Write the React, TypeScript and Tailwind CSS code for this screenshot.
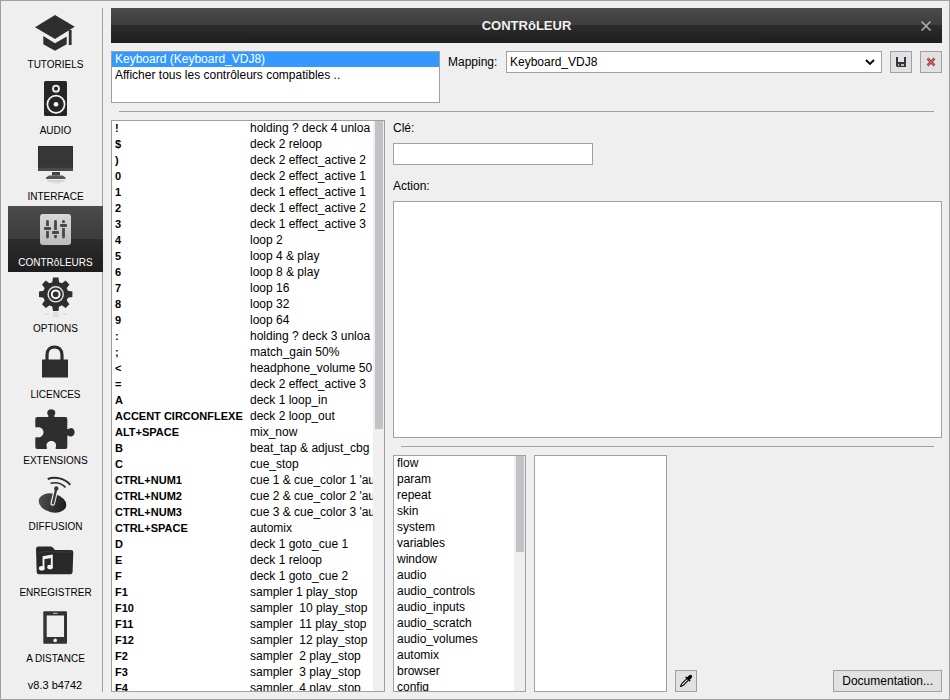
import React from "react";

type Section = { label: string; icon: React.ReactNode };

const DARK = "#2e2e2e";
const LIGHT = "#f4f4f4";

const gearTeeth = [0, 45, 90, 135, 180, 225, 270, 315];

const sections: Section[] = [
  {
    label: "TUTORIELS",
    icon: (
      <g fill={DARK}>
        <path d="M23 7 L42.7 18.8 L23 31 L3 19.2 Z" />
        <path d="M11.3 28 L23 35.3 L34.7 28.5 V36.3 L23 42.7 L11.3 36.3 Z" />
        <path d="M36.8 22 H39.6 V37 H36.8 Z" />
      </g>
    ),
  },
  {
    label: "AUDIO",
    icon: (
      <g>
        <rect x="12" y="7" width="23" height="35" rx="1.5" fill="#262626" />
        <circle cx="24" cy="14.7" r="3" fill="none" stroke={LIGHT} strokeWidth="1.8" />
        <circle cx="24" cy="30.3" r="8.6" fill="none" stroke={LIGHT} strokeWidth="1.7" />
        <circle cx="24" cy="30.3" r="2.4" fill={LIGHT} />
      </g>
    ),
  },
  {
    label: "INTERFACE",
    icon: (
      <g>
        <rect x="6" y="6" width="35" height="25" fill="#2c2c2c" />
        <rect x="7" y="7" width="33" height="20" fill="#363636" />
        <rect x="6" y="27.5" width="35" height="3.5" fill="#4a4a4a" />
        <rect x="20" y="32" width="8" height="3.5" fill="#444" />
        <path d="M14 39 V37.5 L17 35.5 H30.500 L33.500 37.5 V39 Z" fill="#555" />
        <path d="M14 40 H33.5 L31 42 H17 Z" fill="#d2d2d2" />
        <rect x="20" y="42" width="8" height="2" fill="#e2e2e2" />
      </g>
    ),
  },
  {
    label: "CONTRôLEURS",
    icon: (
      <g>
        <rect x="8" y="8" width="31" height="31" rx="3" fill="url(#tile)" />
        <path
          d="M15.500 15.500 V31 M23.500 15.500 V31 M31.500 15.500 V31"
          stroke="#484848"
          strokeWidth="2.800"
          strokeLinecap="round"
        />
        <path d="M13.500 20 h4 v5 h-4 Z M21.500 24 h4 v5 h-4 Z M29.500 17 h4 v5 h-4 Z" fill="#cacaca" />
        <g fill="#484848">
          <rect x="12" y="21" width="7" height="3" rx="1" />
          <rect x="20" y="25" width="7" height="3" rx="1" />
          <rect x="28" y="18" width="7" height="3" rx="1" />
        </g>
      </g>
    ),
  },
  {
    label: "OPTIONS",
    icon: (
      <g>
        <g fill={DARK}>
          <circle cx="23.7" cy="22.3" r="12.6" />
          {gearTeeth.map((a) => (
            <path key={a} d="M20 12 L21 5.6 H26.4 L27.4 12 Z" transform={`rotate(${a} 23.7 22.3)`} />
          ))}
        </g>
        <circle cx="23.7" cy="22.3" r="7.6" fill="none" stroke="#e6e6e6" strokeWidth="1.4" />
        <circle cx="23.7" cy="22.3" r="3.9" fill="none" stroke={LIGHT} strokeWidth="2" />
        <path d="M12.500 41 h4 v2 h-4 Z M21 40 h5.500 v5 h-5.500 Z M31 41 h4 v2 h-4 Z" fill="#dedede" />
      </g>
    ),
  },
  {
    label: "LICENCES",
    icon: (
      <g>
        <rect x="10" y="21.500" width="26" height="18" fill="#2f2c2d" />
        <path d="M15 22 V17 C15 11.500 18.500 9 22.500 9 C26.500 9 30 11.500 30 17 V22" fill="none" stroke="#2f2c2d" strokeWidth="3.200" />
      </g>
    ),
  },
  {
    label: "EXTENSIONS",
    icon: (
      <path
        d="M5.300 13 H15.200 C16.800 13 16.800 12.300 15.900 11 C14.200 8 16 5.200 19.300 5.200 C22.600 5.200 24.400 8 22.700 11 C21.800 12.300 21.800 13 23.400 13 H33.300 Q35.300 13 35.300 15 V24 C35.300 25.500 36 25.300 37 24.700 C40 23 42.600 25.200 42.600 28.300 C42.600 31.400 40 33.600 37 31.900 C36 31.300 35.300 31.100 35.300 32.600 V43 Q35.300 45 33.300 45 H24.500 C23.200 45 23.500 44.300 23.900 43 C24.800 39.500 22.500 37 19.300 37 C16.100 37 13.800 39.500 14.700 43 C15.100 44.300 15.400 45 14.100 45 H5.300 Q3.300 45 3.300 43 V34.500 C3.300 33 4 33 5.300 33.300 C8.800 34 11.500 31.500 11.500 28.300 C11.500 25.100 8.800 22.600 5.300 23.300 C4 23.600 3.300 23.500 3.300 22.100 V15 Q3.300 13 5.300 13 Z"
        fill={DARK}
      />
    ),
  },
  {
    label: "DIFFUSION",
    icon: (
      <g>
        <ellipse cx="20.500" cy="33" rx="14" ry="9.300" transform="rotate(14 20.500 33)" fill="url(#dish)" />
        <path d="M20.700 33.500 L24.200 19" stroke={LIGHT} strokeWidth="4.600" strokeLinecap="round" />
        <path d="M20.900 33.300 L24.200 19" stroke="#3a3a3a" strokeWidth="2.400" strokeLinecap="round" />
        <circle cx="24.300" cy="18.500" r="2.200" fill="#3a3a3a" />
        <path d="M18.700 13.300 C24 12 29.500 13.300 33.500 17.300" fill="none" stroke="#2b2b2b" strokeWidth="1.700" />
        <path d="M15.700 9 C23.500 6.300 32.500 8.300 38.300 14.800" fill="none" stroke="#2b2b2b" strokeWidth="1.900" />
      </g>
    ),
  },
  {
    label: "ENREGISTRER",
    icon: (
      <g>
        <path d="M6.500 10.500 H18.500 Q20 10.500 21 11.700 L23 14 H39 Q41.300 14 41.300 16.300 L40.600 36 Q40.400 38.200 38.300 38.200 H7 Q4.800 38.200 4.700 36 L4 13 Q4 10.500 6.500 10.500 Z" fill="#292929" />
        <path d="M5.500 17 Q14 14.500 23 16 H40" fill="none" stroke="#3a3a3a" strokeWidth="1" />
        <path d="M11.500 31.500 V21 L19.800 19.600 V30" fill="none" stroke={LIGHT} strokeWidth="1.900" />
        <path d="M11.500 22 L19.800 20.600" stroke={LIGHT} strokeWidth="2.600" />
        <ellipse cx="9.800" cy="32.300" rx="2.900" ry="2.300" fill={LIGHT} />
        <ellipse cx="18.100" cy="31" rx="2.900" ry="2.300" fill={LIGHT} />
      </g>
    ),
  },
  {
    label: "A DISTANCE",
    icon: (
      <g>
        <rect x="11.300" y="9.300" width="23.700" height="32.500" rx="1" fill="#333" />
        <rect x="14.700" y="13.500" width="17.300" height="21.500" fill="#efefef" />
        <rect x="21" y="10.800" width="4.500" height="1" fill="#ccc" />
        <circle cx="23.200" cy="38.400" r="1.800" fill={LIGHT} />
      </g>
    ),
  },
];

const bindings: [string, string][] = [
  ["!", "holding ? deck 4 unloa"],
  ["$", "deck 2 reloop"],
  [")", "deck 2 effect_active 2"],
  ["0", "deck 2 effect_active 1"],
  ["1", "deck 1 effect_active 1"],
  ["2", "deck 1 effect_active 2"],
  ["3", "deck 1 effect_active 3"],
  ["4", "loop 2"],
  ["5", "loop 4 & play"],
  ["6", "loop 8 & play"],
  ["7", "loop 16"],
  ["8", "loop 32"],
  ["9", "loop 64"],
  [":", "holding ? deck 3 unloa"],
  [";", "match_gain 50%"],
  ["<", "headphone_volume 50"],
  ["=", "deck 2 effect_active 3"],
  ["A", "deck 1 loop_in"],
  ["ACCENT CIRCONFLEXE", "deck 2 loop_out"],
  ["ALT+SPACE", "mix_now"],
  ["B", "beat_tap & adjust_cbg"],
  ["C", "cue_stop"],
  ["CTRL+NUM1", "cue 1 & cue_color 1 'au"],
  ["CTRL+NUM2", "cue 2 & cue_color 2 'au"],
  ["CTRL+NUM3", "cue 3 & cue_color 3 'au"],
  ["CTRL+SPACE", "automix"],
  ["D", "deck 1 goto_cue 1"],
  ["E", "deck 1 reloop"],
  ["F", "deck 1 goto_cue 2"],
  ["F1", "sampler 1 play_stop"],
  ["F10", "sampler  10 play_stop"],
  ["F11", "sampler  11 play_stop"],
  ["F12", "sampler  12 play_stop"],
  ["F2", "sampler  2 play_stop"],
  ["F3", "sampler  3 play_stop"],
  ["F4", "sampler  4 play_stop"],
];

const categories = [
  "flow", "param", "repeat", "skin", "system", "variables", "window", "audio",
  "audio_controls", "audio_inputs", "audio_scratch", "audio_volumes", "automix",
  "browser", "config",
];

function Sidebar() {
  return (
    <nav className="flex w-[95px] shrink-0 flex-col border-r border-[#a0a0a0]">
      {sections.map((s) => {
        const active = s.label === "CONTRôLEURS";
        return (
          <button
            key={s.label}
            type="button"
            aria-current={active ? "page" : undefined}
            className={
              active
                ? "-mr-px flex h-[66px] flex-col items-center bg-[linear-gradient(#4b4b4b,#3c3c3c_50%,#2c2c2c_50%,#1e1e1e)] text-[10px] leading-3 text-white"
                : "-mr-px flex h-[66px] flex-col items-center text-[10px] leading-3 text-black"
            }
          >
            <svg width="47" height="51" viewBox="0 0 47 51" className="block shrink-0" aria-hidden="true">
              <defs>
                <linearGradient id="tile" x1="0" y1="0" x2="0" y2="1">
                  <stop offset="0" stopColor="#d8d8d8" />
                  <stop offset="1" stopColor="#bcbcbc" />
                </linearGradient>
                <linearGradient id="dish" x1="0" y1="0" x2="1" y2="0">
                  <stop offset="0" stopColor="#505050" />
                  <stop offset="1" stopColor="#1c1c1c" />
                </linearGradient>
              </defs>
              {s.icon}
            </svg>
            <span className="whitespace-nowrap">{s.label}</span>
          </button>
        );
      })}
      <p className="mt-auto text-center text-[11px] leading-[14px]">v8.3 b4742</p>
    </nav>
  );
}

function ScrollTrack({ thumb }: { thumb: string }) {
  return (
    <div className="w-[11px] shrink-0 bg-[#efefef] pr-px pl-0.5" aria-hidden="true">
      <div className={thumb} />
    </div>
  );
}

function KeyList() {
  return (
    <div className="flex w-[274px] shrink-0 overflow-hidden border border-[#a0a0a0] bg-white">
      <div className="min-w-0 flex-1 overflow-hidden pl-[3px]">
        <table className="-mt-px w-full table-fixed border-collapse leading-4">
          <colgroup>
            <col className="w-[135px]" />
            <col />
          </colgroup>
          <tbody>
            {bindings.map(([key, action]) => (
              <tr key={key} className="h-4">
                <th scope="row" className="p-0 text-left text-[11px] leading-4 font-bold whitespace-nowrap">
                  {key}
                </th>
                <td className="p-0 whitespace-pre">{action}</td>
              </tr>
            ))}
          </tbody>
        </table>
      </div>
      <ScrollTrack thumb="h-[54%] bg-[#c1c1c6]" />
    </div>
  );
}

function Toolbar() {
  const iconButton =
    "flex size-[22px] shrink-0 items-center justify-center border border-[#a0a0a0] bg-[#e1e1e1]";
  return (
    <div className="flex items-start gap-2">
      <div className="h-[52px] w-[329px] shrink-0 overflow-hidden border border-[#a0a0a0] bg-white">
        <ul role="listbox" aria-label="Contrôleurs" className="-mt-px leading-4">
          <li role="option" aria-selected="true" className="bg-[#3399ff] px-[3px] text-white">
            Keyboard (Keyboard_VDJ8)
          </li>
          <li role="option" aria-selected="false" className="px-[3px]">
            Afficher tous les contrôleurs compatibles ..
          </li>
        </ul>
      </div>
      <label htmlFor="mapping" className="w-[50px] shrink-0 leading-[22px]">
        Mapping:
      </label>
      <div className="relative min-w-0 flex-1">
        <select
          id="mapping"
          className="block h-[22px] w-full appearance-none rounded-none border border-[#a0a0a0] bg-white py-0 pr-6 pl-[3px] text-[12px] leading-5 text-black"
        >
          <option>Keyboard_VDJ8</option>
        </select>
        <svg width="10" height="7" viewBox="0 0 10 7" className="pointer-events-none absolute top-2 right-[7px]" aria-hidden="true">
          <path d="M1 1 L5 5 L9 1" fill="none" stroke="#000" strokeWidth="1.800" />
        </svg>
      </div>
      <button type="button" aria-label="Enregistrer le mapping" className={iconButton}>
        <svg width="10" height="10" viewBox="0 0 10 10" aria-hidden="true">
          <path d="M0 0 H10 V10 H1 L0 9 Z" fill="#33373d" />
          <rect x="2" y="0" width="6" height="5" fill="#dfe3e7" />
          <rect x="2" y="7" width="6" height="2" fill="#b4bac2" />
          <rect x="3" y="7" width="2" height="2" fill="#33373d" />
        </svg>
      </button>
      <button type="button" aria-label="Supprimer le mapping" className={iconButton}>
        <svg width="10" height="10" viewBox="0 0 10 10" aria-hidden="true">
          <path d="M1.500 1.500 L8.500 8.500 M8.500 1.500 L1.500 8.500" stroke="#a84640" strokeWidth="2.600" />
          <path d="M2 2 L8 8 M8 2 L2 8" stroke="#cf7770" strokeWidth="0.800" />
        </svg>
      </button>
    </div>
  );
}

function Editor() {
  return (
    <div className="flex min-w-0 flex-1 flex-col">
      <label htmlFor="cle" className="leading-4">
        Clé:
      </label>
      <input
        id="cle"
        type="text"
        className="mt-[7px] h-[22px] w-[200px] rounded-none border border-[#a0a0a0] bg-white px-[3px]"
      />
      <label htmlFor="action" className="mt-[13px] mb-[7px] leading-4">
        Action:
      </label>
      <div className="flex min-h-0 flex-1">
        <textarea
          id="action"
          className="w-full resize-none rounded-none border border-[#a0a0a0] bg-white px-[3px]"
        />
      </div>
      <hr className="mx-2 my-2 border-t border-[#a0a0a0]" />
      <div className="flex min-h-0 flex-1 items-stretch gap-2">
        <div className="flex w-[133px] shrink-0 overflow-hidden border border-[#a0a0a0] bg-white">
          <ul role="listbox" aria-label="Catégories" className="-mt-px min-w-0 flex-1 pl-[3px] leading-4">
            {categories.map((c) => (
              <li key={c} role="option" aria-selected="false">
                {c}
              </li>
            ))}
          </ul>
          <ScrollTrack thumb="h-[41%] bg-[#c1c1c6]" />
        </div>
        <div className="w-[133px] shrink-0 border border-[#a0a0a0] bg-white" />
        <div className="flex flex-1 items-end justify-between">
          <button
            type="button"
            aria-label="Pipette"
            className="flex size-[22px] items-center justify-center border border-[#a0a0a0] bg-[#e1e1e1]"
          >
            <svg width="14" height="14" viewBox="0 0 14 14" aria-hidden="true">
              <path d="M7.800 4.600 L2.800 9.600 L1.500 12.500 L4.400 11.200 L9.400 6.200" fill="#f4f4f4" stroke="#000" strokeWidth="1.100" strokeLinejoin="round" />
              <path d="M6.200 3.400 L7.300 2.400 L8.300 3.200 L10.300 1.200 Q11.700 0.300 12.700 1.300 Q13.700 2.300 12.800 3.700 L10.800 5.700 L11.600 6.700 L10.600 7.800 Z" fill="#000" />
            </svg>
          </button>
          <button type="button" className="h-[22px] border border-[#a0a0a0] bg-[#e1e1e1] px-2 leading-5">
            Documentation...
          </button>
        </div>
      </div>
    </div>
  );
}

export default function App() {
  return (
    <div className="flex h-screen gap-2 border border-[#a0a0a0] bg-[#efefef] p-[7px] font-['Liberation_Sans',Arial,sans-serif] text-[12px] text-black">
      <Sidebar />
      <main className="flex min-w-0 flex-1 flex-col">
        <header className="mb-2 grid h-[35px] shrink-0 grid-cols-[1fr_auto_1fr] items-center bg-[linear-gradient(#4b4b4b,#3c3c3c_50%,#2c2c2c_50%,#1e1e1e)] text-white">
          <h1 className="col-start-2 text-[13px] font-bold text-[#f0f0f0]">CONTRôLEUR</h1>
          <button type="button" aria-label="Fermer" className="mr-[11px] justify-self-end">
            <svg width="10" height="10" viewBox="0 0 10 10" className="block" aria-hidden="true">
              <path d="M0.500 0.500 L9.500 9.500 M9.500 0.500 L0.500 9.500" stroke="#b4b4b4" strokeWidth="1.500" />
            </svg>
          </button>
        </header>
        <Toolbar />
        <hr className="m-2 border-t border-[#a0a0a0]" />
        <div className="flex min-h-0 flex-1 gap-2">
          <KeyList />
          <Editor />
        </div>
      </main>
    </div>
  );
}
